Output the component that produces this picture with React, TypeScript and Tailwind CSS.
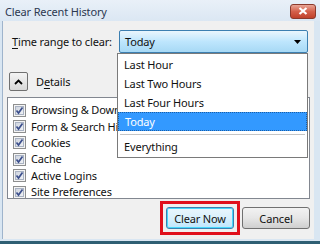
import React from "react";

const font = { fontFamily: '"Noto Sans", "Open Sans", sans-serif' };

function Check() {
  return (
    <svg width="13" height="13" viewBox="0 0 13 13" className="shrink-0">
      <defs>
        <linearGradient id="cbg" x1="0" y1="0" x2="1" y2="1">
          <stop offset="0" stopColor="#cdd3de" />
          <stop offset="1" stopColor="#f1f3f6" />
        </linearGradient>
      </defs>
      <rect x="0.5" y="0.5" width="12" height="12" fill="#f4f4f4" stroke="#8e8f8f" />
      <rect x="2.5" y="2.5" width="8" height="8" fill="url(#cbg)" stroke="#aab3c3" />
      <path d="M3.5 6.5 L5.5 9 L9.5 3.5" fill="none" stroke="#3c4f8c" strokeWidth="1.7" />
    </svg>
  );
}

export default function App() {
  const items = [
    "Browsing & Download History",
    "Form & Search History",
    "Cookies",
    "Cache",
    "Active Logins",
    "Site Preferences",
  ];
  return (
    <div
      className="w-[320px] h-[244px] relative overflow-hidden bg-[#d9e6f2] flex flex-col text-[11px] tracking-[-0.15px] text-[#111]"
      style={font}
    >
      {/* title bar */}
      <div className="h-[21px] flex items-center pl-[5px] pr-[4px] bg-gradient-to-b from-[#e9f0f8] to-[#dbe7f3] shrink-0">
        <span className="text-[11px] text-[#2c3850] leading-none mt-[2px] whitespace-nowrap">Clear Recent History</span>
        <div className="ml-auto mt-[1px] w-[26px] h-[15px] rounded-[3px] border border-[#8b3a2c] bg-gradient-to-b from-[#e8a596] via-[#d4604a] to-[#c0412a] flex items-center justify-center">
          <svg width="10" height="8" viewBox="0 0 10 8">
            <path d="M1.5 1 L8.5 7 M8.5 1 L1.5 7" stroke="#ffffff" strokeWidth="2.2" />
          </svg>
        </div>
      </div>
      {/* body */}
      <div className="flex-1 ml-[2px] mr-[6px] mb-[5px] border-l border-[#9fb4cc] bg-[#f0f0f0] flex flex-col pl-[4px] pr-[4px]">
        <div className="flex items-center mt-[9px] h-[23px]">
          <span className="ml-[5px] w-[106px] leading-none whitespace-nowrap">
            <span className="underline underline-offset-2">T</span>ime range to clear:
          </span>
          <div className="ml-[1px] w-[189px] h-[23px] border border-[#3c7fb1] rounded-[2px] bg-gradient-to-b from-[#eaf6fd] via-[#bee6fd] to-[#a7d9f5] flex items-center pl-[5px] pr-[6px]">
            <span className="leading-none">Today</span>
            <svg className="ml-auto" width="7" height="4" viewBox="0 0 7 4">
              <path d="M0 0 L7 0 L3.5 4 Z" fill="#000" />
            </svg>
          </div>
        </div>
        <div className="flex items-center mt-[19px] h-[19px]">
          <div className="ml-[2px] w-[19px] h-[19px] border border-[#707070] rounded-[2px] bg-gradient-to-b from-[#f4f4f4] to-[#d8d8d8] flex items-center justify-center">
            <svg width="9" height="6" viewBox="0 0 9 6">
              <path d="M1 5 L4.5 1.5 L8 5" fill="none" stroke="#000" strokeWidth="1.8" />
            </svg>
          </div>
          <span className="ml-[8px] leading-none">
            D<span className="underline underline-offset-2">e</span>tails
          </span>
        </div>
        <div className="mt-[6px] h-[102px] bg-white border border-[#828790] pt-[4px] flex flex-col overflow-hidden">
          {items.map((t) => (
            <div key={t} className="h-[16.4px] flex items-center pl-[5px] shrink-0">
              <Check />
              <span className="ml-[5px] leading-[14px] whitespace-nowrap">{t}</span>
            </div>
          ))}
        </div>
        <div className="flex justify-end items-center mt-[2px] pr-[0px]">
          <div className="border-[3px] border-[#e0101c] p-[3px] mr-[2px]">
            <div className="w-[68px] h-[22px] border border-[#3c7fb1] rounded-[3px] bg-gradient-to-b from-[#eaf6fd] via-[#d9f0fc] to-[#bee6fd] flex items-center justify-center shadow-[inset_0_0_0_1px_#48d8fb]">
              <span className="leading-none">Clear Now</span>
            </div>
          </div>
          <div className="w-[68px] h-[22px] border border-[#707070] rounded-[3px] bg-gradient-to-b from-[#f2f2f2] via-[#e6e6e6] to-[#cfcfcf] flex items-center justify-center">
            <span className="leading-none">Cancel</span>
          </div>
        </div>
      </div>
      <div className="absolute left-0 right-0 bottom-0 h-[3px] bg-[#2f5f73]" />
      {/* dropdown list */}
      <div className="absolute left-[117px] top-[53px] w-[191px] h-[105px] bg-white border border-[#7a7a7a] flex flex-col pt-[1px]">
        {["Last Hour", "Last Two Hours", "Last Four Hours"].map((t) => (
          <div key={t} className="h-[19px] flex items-center pl-[6px] leading-none">
            {t}
          </div>
        ))}
        <div className="h-[19px] flex items-center pl-[6px] leading-none bg-[#3399ff] text-white border border-dotted border-[#1b5fa6]">
          Today
        </div>
        <div className="mx-[2px] mt-[3px] mb-[2px] h-px bg-[#c5c5c5]" />
        <div className="h-[19px] flex items-center pl-[6px] leading-none">Everything</div>
      </div>
    </div>
  );
}
